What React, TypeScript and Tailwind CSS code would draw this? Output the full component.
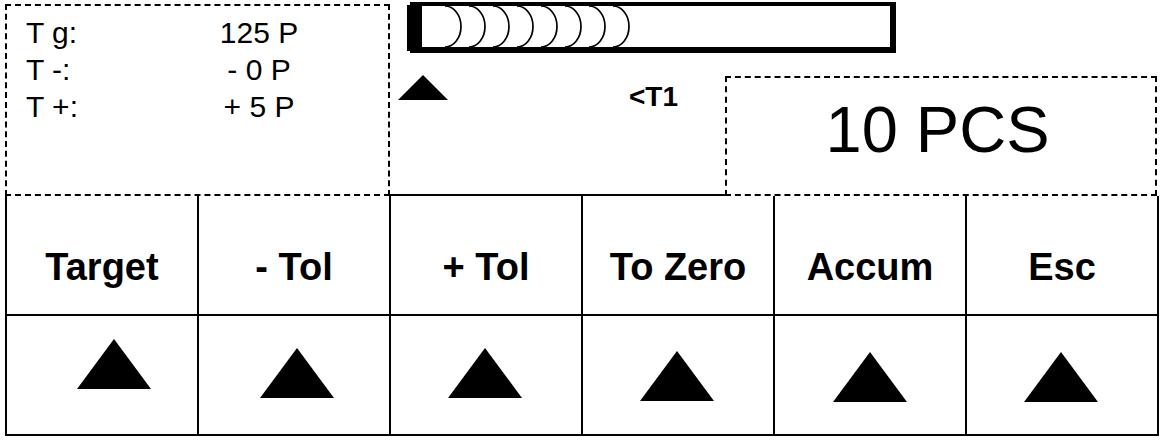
const keys = [
  { label: "Target", nudge: "pl-[24px] pb-[22px]" },
  { label: "- Tol", nudge: "pl-[5px] pb-[4px]" },
  { label: "+ Tol", nudge: "pr-[2px] pb-[4px]" },
  { label: "To Zero", nudge: "pr-[2px] pt-[2px]" },
  { label: "Accum", nudge: "pr-[1px] pt-[4px]" },
  { label: "Esc", nudge: "pr-[2px] pt-[4px]" },
];

const limits = [
  { name: "T g:", value: "125 P" },
  { name: "T -:", value: "- 0 P" },
  { name: "T +:", value: "+ 5 P" },
];

function Triangle({ w, h }: { w: number; h: number }) {
  return (
    <svg width={w} height={h} viewBox={`0 0 ${w} ${h}`} className="block shrink-0">
      <polygon points={`${w / 2},0 ${w},${h} 0,${h}`} fill="#000" />
    </svg>
  );
}

// fill gauge: battery-like frame with arc segments
function Gauge({ segments }: { segments: number }) {
  const arcs = Array.from({ length: segments }).map((_, i) => 54 + i * 24);
  return (
    <svg width={489} height={51} viewBox="0 0 489 51" className="block">
      <rect x={3} y={0} width={486} height={4} fill="#000" />
      <rect x={3} y={45} width={486} height={6} fill="#000" />
      <rect x={483} y={0} width={6} height={51} fill="#000" />
      <rect x={0} y={3} width={15} height={46} fill="#000" />
      {arcs.map((x) => (
        <path
          key={x}
          d={`M ${x - 16} 4 A 16 20.5 0 0 1 ${x - 16} 45`}
          fill="none"
          stroke="#000"
          strokeWidth={1.7}
        />
      ))}
    </svg>
  );
}

export default function App() {
  return (
    <div className="h-[445px] w-[1160px] overflow-hidden bg-white pl-[5px] font-['Liberation_Sans',Arial,sans-serif] text-black">
      {/* Top status area */}
      <div className="flex h-[196px]">
        <div className="mt-[4px] h-[192px] w-[385px] border-2 border-dashed border-black pl-[19px] pt-[8px]">
          {limits.map((row) => (
            <div key={row.name} className="flex text-[30px] leading-[37px]">
              <span className="w-[174px]">{row.name}</span>
              <span className="w-[118px] text-center">{row.value}</span>
            </div>
          ))}
        </div>

        <div className="flex w-[769px] flex-col">
          <div className="ml-[17px] mt-[2px] h-[73px]">
            <Gauge segments={8} />
          </div>
          <div className="flex">
            <div className="flex h-[121px] w-[335px] items-start border-b-2 border-black">
              <div className="ml-[8px]">
                <Triangle w={50} h={25} />
              </div>
              <span className="ml-[181px] mt-[6px] text-[28px] font-bold leading-[32px]">&lt;T1</span>
            </div>
            <div className="mt-[1px] flex h-[120px] w-[432px] items-start justify-center border-2 border-dashed border-black pr-[7px] pt-[15px]">
              <span className="text-[65px] leading-[73px]">10 PCS</span>
            </div>
          </div>
        </div>
      </div>

      {/* Soft keys */}
      <div className="w-[1154px] border-l-2 border-black">
        <div className="flex h-[120px] border-b-2 border-black">
          {keys.map((k) => (
            <div
              key={k.label}
              className="flex w-[192px] justify-center border-r-2 border-black pt-[49px] text-[38px] font-bold leading-[44px]"
            >
              {k.label}
            </div>
          ))}
        </div>
        <div className="flex h-[120px] border-b-2 border-black">
          {keys.map((k) => (
            <div
              key={k.label}
              className={`flex w-[192px] items-center justify-center border-r-2 border-black ${k.nudge}`}
            >
              <Triangle w={74} h={50} />
            </div>
          ))}
        </div>
      </div>
    </div>
  );
}
